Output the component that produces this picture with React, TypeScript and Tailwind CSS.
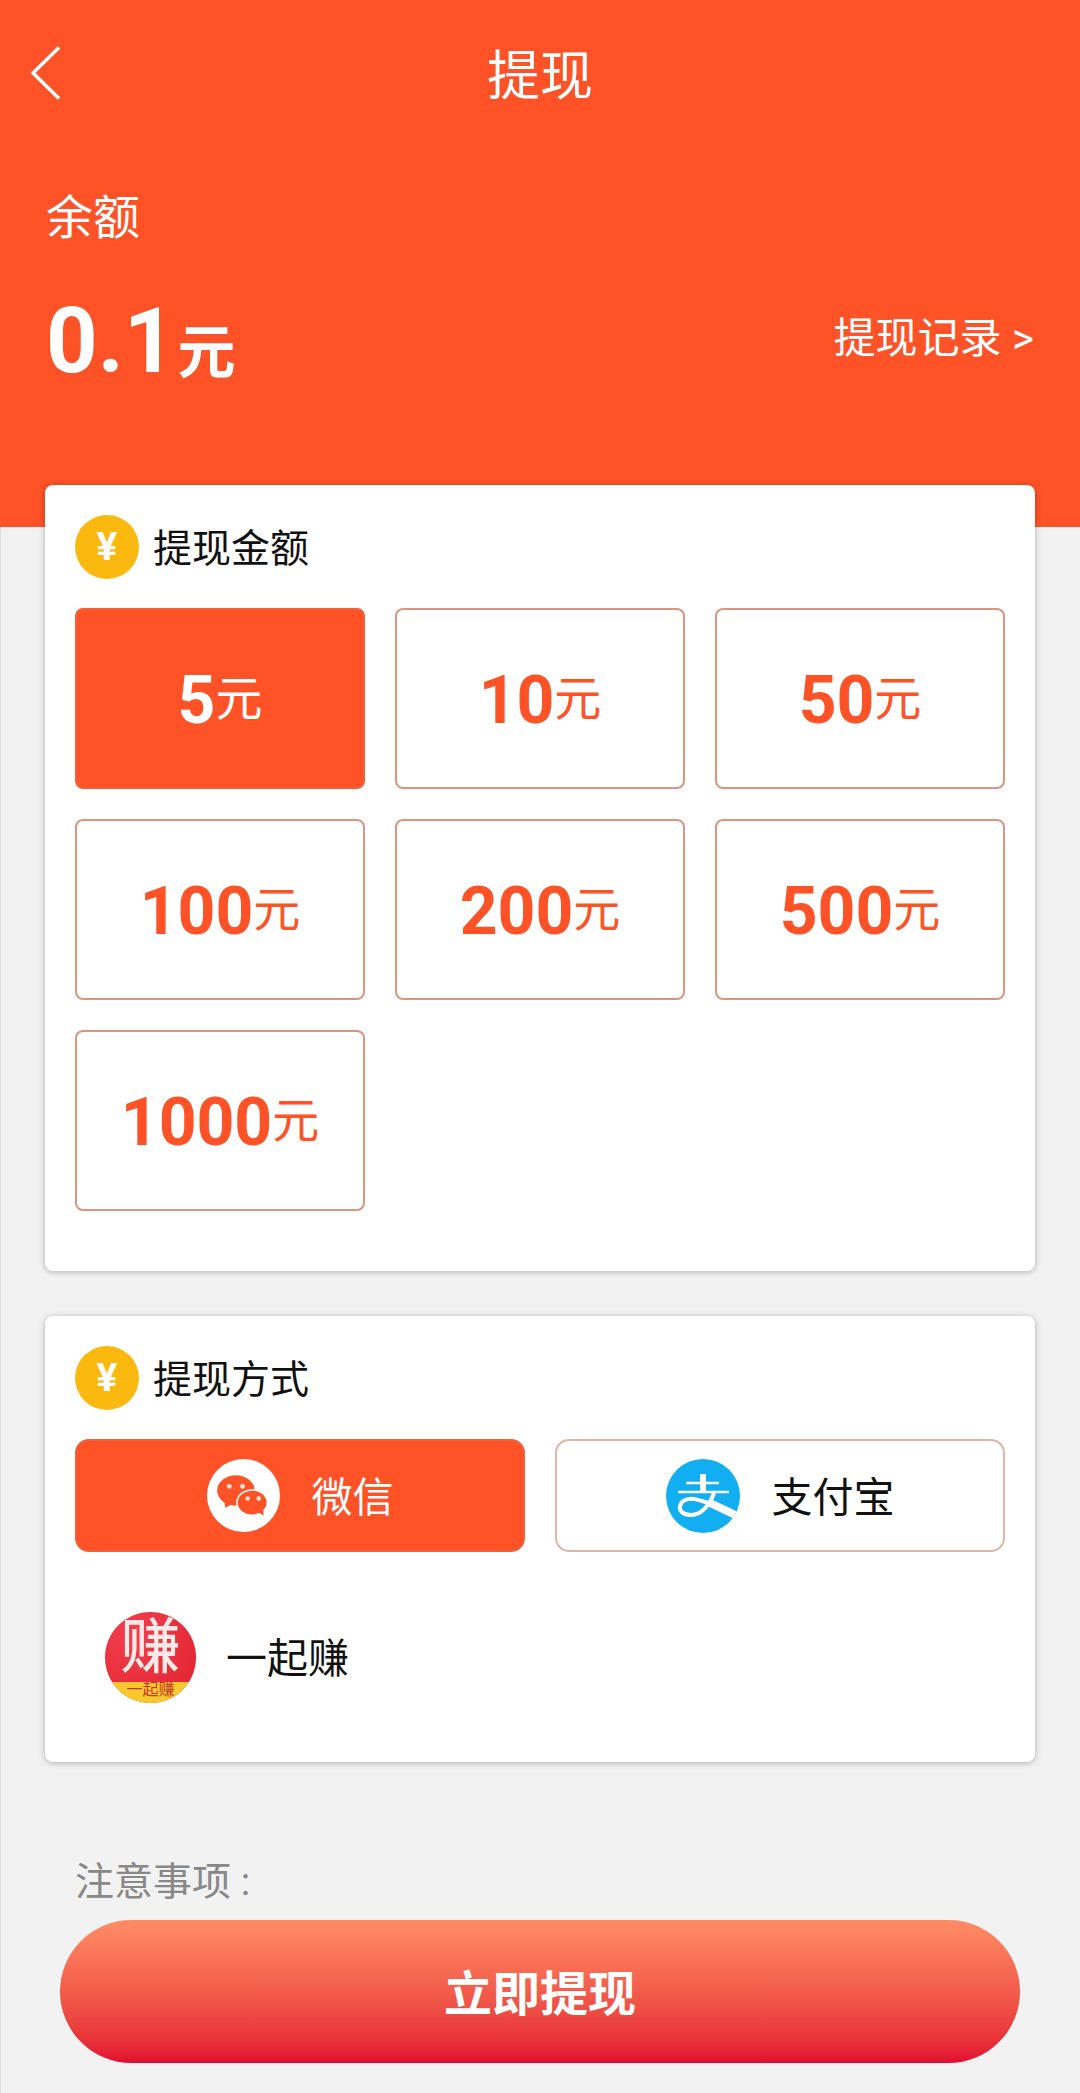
const font = 'font-["Roboto","Noto_Sans_CJK_SC",sans-serif]';

const amounts = ['5', '10', '50', '100', '200', '500', '1000'];

function YuanBadge() {
  return (
    <div className="flex h-[64px] w-[64px] shrink-0 items-center justify-center rounded-full bg-[#fbb90f] text-[39px] font-bold leading-none text-white">
      ¥
    </div>
  );
}

function SectionTitle({ title }: { title: string }) {
  return (
    <div className="flex items-center gap-[14px]">
      <YuanBadge />
      <span className="mt-[4px] text-[39px] leading-none text-[#111]">{title}</span>
    </div>
  );
}

function AmountOption({ value, active }: { value: string; active?: boolean }) {
  return (
    <div
      className={
        active
          ? 'flex h-[181px] items-center justify-center rounded-[8px] border-2 border-[#f0603a] bg-[#ff5227] pt-[4px] text-white'
          : 'flex h-[181px] items-center justify-center rounded-[8px] border-2 border-[#d89680] bg-white pt-[4px] text-[#ff5227]'
      }
    >
      <span className="text-[66px] font-bold leading-none">{value}</span>
      <span className="mt-[-4px] text-[47px] leading-none">元</span>
    </div>
  );
}

function WechatIcon() {
  return (
    <svg viewBox="0 0 72 72" className="h-[73px] w-[73px]">
      <circle cx="36" cy="36" r="36" fill="#fff" />
      <ellipse cx="28.500" cy="31" rx="18.500" ry="15" fill="#ff5227" />
      <path d="M17 40l1 8 8-4z" fill="#ff5227" />
      <ellipse cx="44.500" cy="43" rx="15" ry="12.500" fill="#ff5227" stroke="#fff" strokeWidth="1.500" />
      <path d="M50 52l6 4-1-8z" fill="#ff5227" />
      <circle cx="22" cy="27" r="2.400" fill="#ffe3d8" />
      <circle cx="35" cy="27" r="2.400" fill="#ffe3d8" />
      <circle cx="40" cy="39" r="2.200" fill="#ffe3d8" />
      <circle cx="51" cy="39" r="2.200" fill="#ffe3d8" />
    </svg>
  );
}

function AlipayIcon() {
  return (
    <svg viewBox="0 0 74 74" className="h-[74px] w-[74px]">
      <defs>
        <clipPath id="alipay-circle">
          <circle cx="37" cy="37" r="37" />
        </clipPath>
      </defs>
      <circle cx="37" cy="37" r="37" fill="#12aef2" />
      <g clipPath="url(#alipay-circle)" fill="none" stroke="#fff">
        <path d="M20 24h33" strokeWidth="2.500" />
        <path d="M12 33h51" strokeWidth="2.500" />
        <path d="M37 15v18" strokeWidth="6" />
        <path
          d="M48 34C44 45 36 56 25 56c-8 0-12-4-11-9 1-5 7-8 14-7 12 2 24 8 37 13"
          strokeWidth="4"
        />
        <path d="M44 44l36 17" strokeWidth="8" />
      </g>
    </svg>
  );
}

function EarnLogo() {
  return (
    <div className="relative flex h-[91px] w-[91px] shrink-0 flex-col items-center rounded-full bg-[radial-gradient(circle_at_30%_25%,#f2404f,#e01f2b)]">
      <div className="absolute inset-0 overflow-hidden rounded-full">
        <div className="absolute bottom-0 left-0 h-[21px] w-full bg-[#f8c92c]" />
      </div>
      <span className="relative mt-[3px] text-[60px] font-medium leading-[66px] text-[#ffe9e6]">赚</span>
      <span className="relative text-[16px] leading-[18px] text-[#c9342a]">一起赚</span>
    </div>
  );
}

export default function App() {
  return (
    <div className={`${font} flex min-h-[2093px] flex-col bg-[#f2f2f2]`}>
      {/* Header */}
      <header className="h-[527px] bg-[#ff5227] text-white">
        <div className="relative flex h-[154px] items-center justify-center">
          <svg viewBox="0 0 30 54" fill="none" className="absolute left-[31px] top-[46px] h-[54px] w-[30px]">
            <path d="M28 1.500 2 27l26 25.500" stroke="#fff" strokeWidth="3.500" />
          </svg>
          <span className="text-[53px] leading-none">提现</span>
        </div>
        <div className="px-[46px] pt-[40px]">
          <div className="text-[47px] leading-[48px]">余额</div>
          <div className="mt-[54px] flex items-center justify-between">
            <div className="flex items-end font-bold">
              <span className="text-[90px] leading-[92px]">0.1</span>
              <span className="mb-[6px] ml-[2px] text-[58px] leading-[58px]">元</span>
            </div>
            <span className="mt-[-6px] text-[42px] leading-none">提现记录 &gt;</span>
          </div>
        </div>
      </header>

      <main className="flex flex-1 flex-col border-l border-[#dcdcdc] pl-[44px] pr-[45px]">
        {/* Amount */}
        <section className="mt-[-42px] rounded-[8px] bg-white px-[30px] pb-[60px] pt-[30px] shadow-[0_1px_6px_rgba(0,0,0,0.28)]">
          <SectionTitle title="提现金额" />
          <div className="mt-[29px] grid grid-cols-3 gap-x-[30px] gap-y-[30px]">
            {amounts.map((value, index) => (
              <AmountOption key={value} value={value} active={index === 0} />
            ))}
          </div>
        </section>

        {/* Method */}
        <section className="mt-[45px] h-[446px] rounded-[8px] bg-white px-[30px] pt-[30px] shadow-[0_1px_6px_rgba(0,0,0,0.28)]">
          <SectionTitle title="提现方式" />
          <div className="mt-[29px] grid grid-cols-2 gap-[30px]">
            <div className="flex h-[113px] items-center justify-center gap-[32px] rounded-[14px] border-2 border-[#f0603a] bg-[#ff5227] text-[41px] text-white">
              <WechatIcon />
              <span className="mt-[7px]">微信</span>
            </div>
            <div className="flex h-[113px] items-center justify-center gap-[32px] rounded-[14px] border-2 border-[#dfb5a6] bg-white text-[41px] text-[#111]">
              <AlipayIcon />
              <span className="mt-[7px]">支付宝</span>
            </div>
          </div>
          <div className="ml-[30px] mt-[60px] flex items-center gap-[30px]">
            <EarnLogo />
            <span className="mt-[4px] text-[41px] leading-none text-[#111]">一起赚</span>
          </div>
        </section>

        <p className="ml-[30px] mt-[101px] text-[39px] leading-none text-[#888]">注意事项 :</p>
        <button className="mx-[15px] mt-[18px] flex h-[143px] items-center justify-center rounded-[72px] bg-gradient-to-b from-[#ff8c66] to-[#e30a30] pt-[6px] text-[48px] font-bold text-white">
          立即提现
        </button>
      </main>
    </div>
  );
}
